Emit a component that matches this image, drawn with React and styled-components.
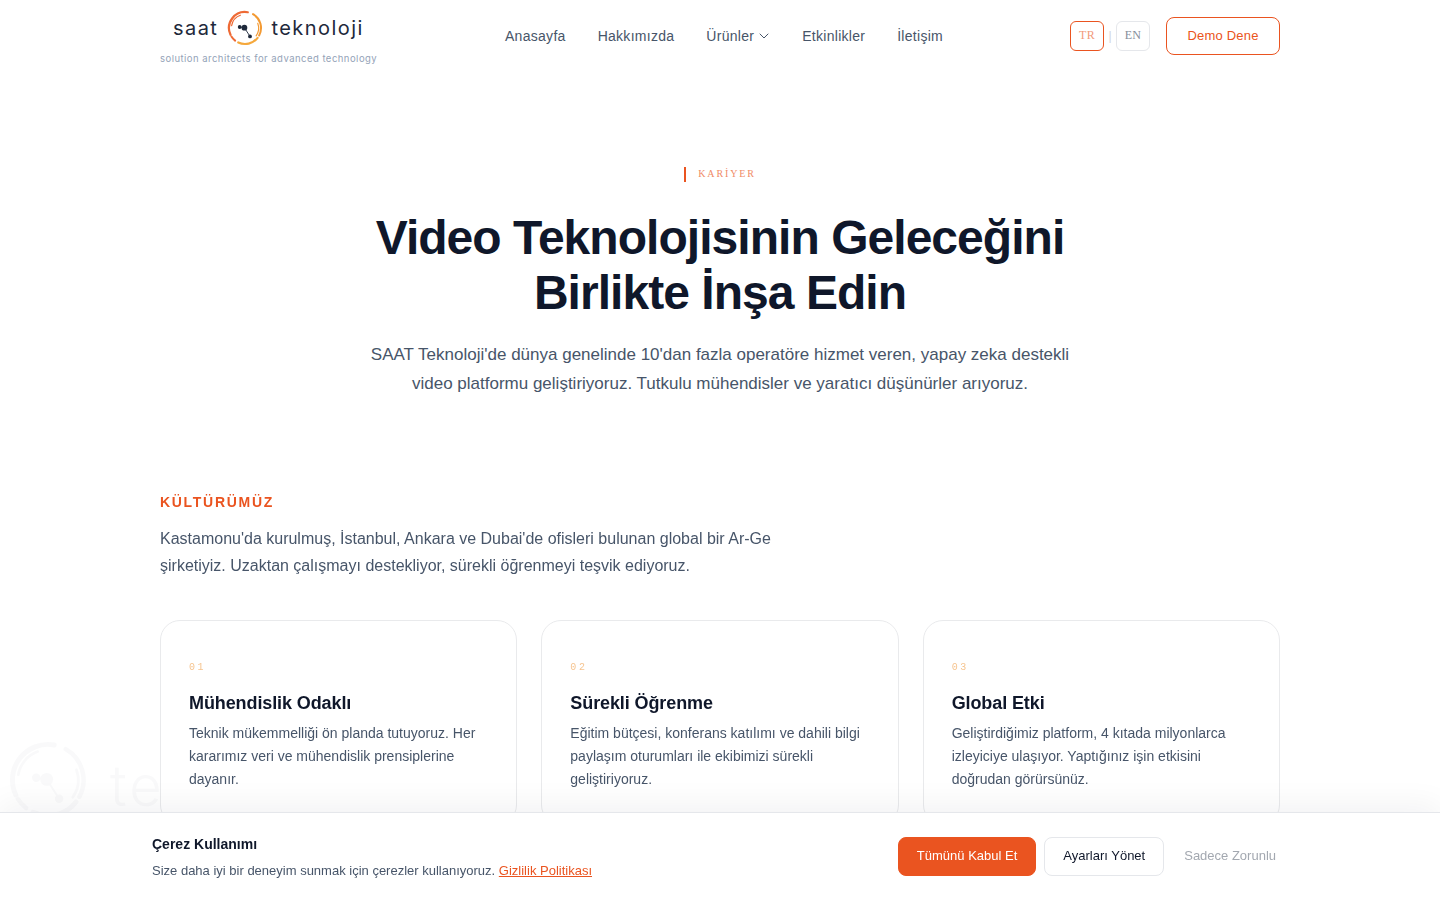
import React from 'react';
import styled, { createGlobalStyle } from 'styled-components';

const Global = createGlobalStyle`
  * { box-sizing: border-box; }
  html, body { margin: 0; padding: 0; background: #fff; height: 100%; overflow: hidden; }
  body { font-family: "Liberation Sans", Arial, sans-serif; color: #0f172a; }
`;
const Page = styled.div`height: 900px; overflow: hidden;`;
const Nav = styled.header`
  position: relative; z-index: 1;
  width: 1120px; margin: 0 auto; height: 72px; display: flex; align-items: flex-start;
`;
const Brand = styled.a`
  width: 217px; height: 72px; display: flex; flex-direction: column; flex: none;
`;
const BrandRow = styled.div`
  display: flex; align-items: center; height: 36px; margin-top: 10px; padding-left: 13px;
  font-family: Inter, sans-serif; font-size: 20px; letter-spacing: 1.45px; color: #1e293b; font-weight: 400;
`;
const BrandMark = styled.svg`width: 36px; height: 36px; margin: 0 8px 0 9px; flex: none;`;
const Tagline = styled.div`
  font-family: Inter, sans-serif; font-size: 9.5px; letter-spacing: 0.47px; color: #94a3b8; white-space: nowrap;
  height: 11px; line-height: 12px; margin-top: 7px; overflow: hidden;
`;
const Menu = styled.nav`
  display: flex; gap: 32px; margin-left: 128px; height: 72px; align-items: center; font-size: 14px; color: #475569; letter-spacing: 0.28px;
`;
const MenuItem = styled.a`display: flex; align-items: center; gap: 4px; white-space: nowrap;`;
const Right = styled.div`margin-left: auto; display: flex; align-items: center; height: 72px;`;
const Lang = styled.button`
  width: 34px; height: 30px; border-radius: 6px; background: #fff; padding: 0 0 2px;
  font-family: "Liberation Serif", serif; font-size: 12px; letter-spacing: 0.3px;
  border: 1px solid ${p => p.$active ? '#ea5420' : '#e5e7eb'};
  color: ${p => p.$active ? '#f29a7b' : '#858d9b'};
`;
const Divider = styled.span`width: 12px; text-align: center; font-size: 12px; color: #d1d5db;`;
const Demo = styled.button`
  width: 114px; height: 38px; margin-left: 16px; padding: 0 0 2px; border-radius: 8px; border: 1px solid #ea5420; background: #fff;
  color: #ea5420; font: 13px "Liberation Sans", Arial, sans-serif; letter-spacing: 0.2px;
`;
const Hero = styled.section`
  position: relative; z-index: 1;
  display: flex; flex-direction: column; align-items: center; padding-top: 95px; height: 398px;
`;
const Eyebrow = styled.div`
  display: flex; align-items: flex-start; gap: 12px; height: 15px; font-family: "Liberation Serif", serif;
  font-size: 10px; line-height: 13px; letter-spacing: 1.85px; color: #f08a66;
  &::before { content: ''; width: 2px; height: 15px; background: #ea5420; }
`;
const Title = styled.h1`
  margin: 28px 0 0; text-align: center; font-size: 48px; line-height: 55px; font-weight: 700; letter-spacing: -0.96px; color: #0f172a;
`;
const Lead = styled.p`
  margin: 20px 0 0; width: 720px; text-align: center; font-size: 17px; line-height: 29px; color: #475569;
`;
const Culture = styled.section`position: relative; z-index: 1; width: 1120px; margin: 0 auto; padding-top: 24px;`;
const Label = styled.h2`
  margin: 0; font-size: 14px; line-height: 16px; font-weight: 700; letter-spacing: 1.7px; color: #ea5420;
`;
const Intro = styled.p`
  margin: 15px 0 0; width: 640px; font-size: 16px; line-height: 27px; color: #475569;
`;
const Cards = styled.div`display: grid; grid-template-columns: repeat(3, 1fr); gap: 24px; margin-top: 41px;`;
const Card = styled.article`
  height: 205px; padding: 41px 28px 0; border: 1px solid #e9eaec; border-radius: 20px; background: #fff;
`;
const Num = styled.div`
  font-family: "Liberation Mono", monospace; font-size: 10px; line-height: 12px; letter-spacing: 2.6px; color: #f6c48f;
`;
const CardTitle = styled.h3`margin: 17px 0 0; font-size: 18px; line-height: 24px; font-weight: 700; color: #0f172a; letter-spacing: -0.1px;`;
const CardText = styled.p`margin: 7px 0 0; font-size: 14px; line-height: 23px; color: #475569;`;
const Watermark = styled.div`
  position: fixed; left: 8px; top: 740px; display: flex; align-items: flex-start; gap: 22px; opacity: .03; pointer-events: none; z-index: 0;
  font-family: Inter, sans-serif; font-weight: 300; font-size: 56px; line-height: 76px; letter-spacing: 3px; color: #475569;
`;
const WatermarkMark = styled.svg`width: 80px; height: 80px; flex: none;`;
const WatermarkText = styled.span`padding-top: 8px;`;
const Cookie = styled.aside`
  position: fixed; z-index: 2; left: 0; right: 0; bottom: 0; height: 88px; background: #fff; border-top: 1px solid #e5e7eb;
  box-shadow: 0 -8px 30px rgba(15, 23, 42, .05); display: flex; justify-content: center;
`;
const CookieInner = styled.div`width: 1136px; display: flex; align-items: center; justify-content: space-between;`;
const CookieCopy = styled.div`padding-top: 2px;`;
const CookieTitle = styled.div`font-size: 14px; line-height: 16px; font-weight: 700; color: #0f172a;`;
const CookieText = styled.p`margin: 11px 0 0; font-size: 13px; line-height: 16px; color: #475569;`;
const PolicyLink = styled.a`color: #ea5420; text-decoration: underline;`;
const CookieActions = styled.div`display: flex; align-items: center; gap: 8px;`;
const CookieButton = styled.button`
  height: 39px; border-radius: 8px; font: 13px "Liberation Sans", Arial, sans-serif; padding: 0 18px 2px;
  border: 1px solid ${p => p.$primary ? '#ea5420' : p.$ghost ? 'transparent' : '#e5e7eb'};
  background: ${p => p.$primary ? '#ea5420' : '#fff'};
  color: ${p => p.$primary ? '#fff' : p.$ghost ? '#a3a8b0' : '#0f172a'};
  ${p => p.$ghost && 'padding: 0 11px 2px;'}
`;

// An arc of the logo ring: angles in degrees, clockwise from twelve o'clock.
const arc = (r, from, to) => {
  const pt = a => {
    const t = (a - 90) * Math.PI / 180;
    return `${(18 + r * Math.cos(t)).toFixed(2)} ${(18 + r * Math.sin(t)).toFixed(2)}`;
  };
  return `M${pt(from)}A${r} ${r} 0 ${to - from > 180 ? 1 : 0} 1 ${pt(to)}`;
};

const RingArt = ({ tones, dot }) => (
  <>
    <path d={arc(16, -115, 10)} stroke={tones[0]} strokeWidth="2.2" strokeLinecap="round" />
    <path d={arc(13.6, -80, -20)} stroke={tones[0]} strokeWidth="1.2" strokeLinecap="round" />
    <path d={arc(16, 30, 118)} stroke={tones[1]} strokeWidth="2" strokeLinecap="round" />
    <path d={arc(13.6, 70, 125)} stroke={tones[1]} strokeWidth="1.2" strokeLinecap="round" />
    <path d={arc(16, 128, 205)} stroke={tones[2]} strokeWidth="2.2" strokeLinecap="round" />
    <path d={arc(16, 218, 238)} stroke={tones[0]} strokeWidth="2" strokeLinecap="round" />
    <path d="M12.7 17L17.4 17.7L23 26.4" stroke={dot} strokeWidth="0.9" />
    <circle cx="12.7" cy="17" r="1.9" fill={dot} />
    <circle cx="17.4" cy="17.7" r="2.9" fill={dot} />
    <circle cx="23" cy="26.4" r="1.9" fill={dot} />
  </>
);

const cards = [
  ['01', 'Mühendislik Odaklı', ['Teknik mükemmelliği ön planda tutuyoruz. Her', 'kararımız veri ve mühendislik prensiplerine', 'dayanır.']],
  ['02', 'Sürekli Öğrenme', ['Eğitim bütçesi, konferans katılımı ve dahili bilgi', 'paylaşım oturumları ile ekibimizi sürekli', 'geliştiriyoruz.']],
  ['03', 'Global Etki', ['Geliştirdiğimiz platform, 4 kıtada milyonlarca', 'izleyiciye ulaşıyor. Yaptığınız işin etkisini', 'doğrudan görürsünüz.']],
];

export default function App() {
  return (
    <Page>
      <Global />
      <Nav>
        <Brand>
          <BrandRow>
            saat
            <BrandMark viewBox="0 0 36 36" fill="none">
              <RingArt tones={['#ee6a35', '#f39a33', '#f5a83c']} dot="#1e293b" />
            </BrandMark>
            teknoloji
          </BrandRow>
          <Tagline>solution architects for advanced technology</Tagline>
        </Brand>
        <Menu>
          <MenuItem>Anasayfa</MenuItem>
          <MenuItem>Hakkımızda</MenuItem>
          <MenuItem>Ürünler
            <svg width="12" height="12" viewBox="0 0 24 24" fill="none" stroke="currentColor" strokeWidth="2" strokeLinecap="round" strokeLinejoin="round"><path d="m4 8 8 8 8-8" /></svg>
          </MenuItem>
          <MenuItem>Etkinlikler</MenuItem>
          <MenuItem>İletişim</MenuItem>
        </Menu>
        <Right>
          <Lang $active>TR</Lang>
          <Divider>|</Divider>
          <Lang>EN</Lang>
          <Demo>Demo Dene</Demo>
        </Right>
      </Nav>
      <Hero>
        <Eyebrow>KARİYER</Eyebrow>
        <Title>Video Teknolojisinin Geleceğini<br />Birlikte İnşa Edin</Title>
        <Lead>SAAT Teknoloji'de dünya genelinde 10'dan fazla operatöre hizmet veren, yapay zeka destekli video platformu geliştiriyoruz. Tutkulu mühendisler ve yaratıcı düşünürler arıyoruz.</Lead>
      </Hero>
      <Culture>
        <Label>KÜLTÜRÜMÜZ</Label>
        <Intro>Kastamonu'da kurulmuş, İstanbul, Ankara ve Dubai'de ofisleri bulunan global bir Ar-Ge şirketiyiz. Uzaktan çalışmayı destekliyor, sürekli öğrenmeyi teşvik ediyoruz.</Intro>
        <Cards>
          {cards.map(([n, t, lines]) => (
            <Card key={n}>
              <Num>{n}</Num>
              <CardTitle>{t}</CardTitle>
              <CardText>{lines.map((l, i) => <React.Fragment key={i}>{l}{i < 2 && <br />}</React.Fragment>)}</CardText>
            </Card>
          ))}
        </Cards>
      </Culture>
      <Watermark>
        <WatermarkMark viewBox="0 0 36 36" fill="none">
          <RingArt tones={['#475569', '#475569', '#475569']} dot="#475569" />
        </WatermarkMark>
        <WatermarkText>te</WatermarkText>
      </Watermark>
      <Cookie>
        <CookieInner>
          <CookieCopy>
            <CookieTitle>Çerez Kullanımı</CookieTitle>
            <CookieText>Size daha iyi bir deneyim sunmak için çerezler kullanıyoruz. <PolicyLink>Gizlilik Politikası</PolicyLink></CookieText>
          </CookieCopy>
          <CookieActions>
            <CookieButton $primary>Tümünü Kabul Et</CookieButton>
            <CookieButton>Ayarları Yönet</CookieButton>
            <CookieButton $ghost>Sadece Zorunlu</CookieButton>
          </CookieActions>
        </CookieInner>
      </Cookie>
    </Page>
  );
}
